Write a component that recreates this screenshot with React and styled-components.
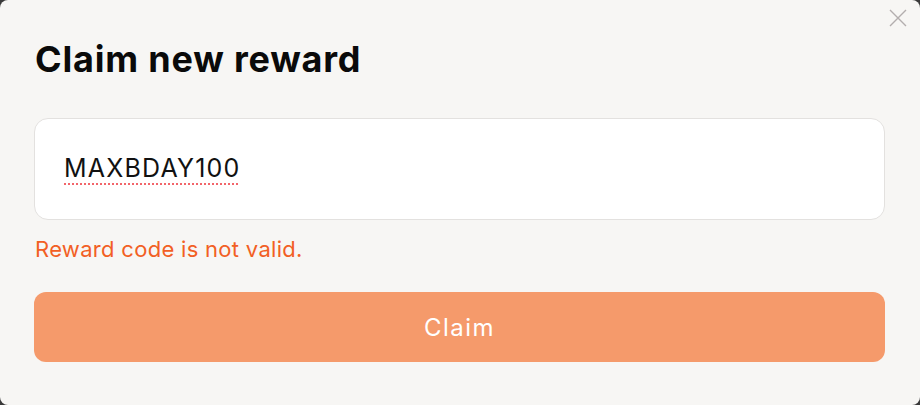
import React from 'react';
import styled, { createGlobalStyle } from 'styled-components';

const GlobalStyle = createGlobalStyle`
  html, body {
    margin: 0;
    padding: 0;
    background: #3a3a3a;
  }
  * {
    box-sizing: border-box;
  }
`;

const ClaimRewardModal = () => {
  return (
    <>
      <GlobalStyle />
      <ModalLayout>
        <CloseButton aria-label="Close">
          <svg width="18" height="18" viewBox="0 0 18 18" fill="none">
            <path d="M1 1L17 17M17 1L1 17" stroke="#b3aeae" strokeWidth="1.4" />
          </svg>
        </CloseButton>
        <ModalTitle>Claim new reward</ModalTitle>
        <CodeField>
          <CodeText>MAXBDAY100</CodeText>
        </CodeField>
        <ErrorText>Reward code is not valid.</ErrorText>
        <ClaimButton>Claim</ClaimButton>
      </ModalLayout>
    </>
  );
};

export default ClaimRewardModal;

const ModalLayout = styled.div`
  position: relative;
  width: 920px;
  height: 405px;
  padding: 36px 35px 0 34px;
  display: flex;
  flex-direction: column;
  background-color: #f7f6f4;
  border-radius: 8px;
  font-family: Inter, 'Liberation Sans', sans-serif;
`;

const CloseButton = styled.button`
  position: absolute;
  top: 9px;
  right: 13px;
  width: 18px;
  height: 18px;
  padding: 0;
  border: none;
  background: none;
  display: flex;
  cursor: pointer;
`;

const ModalTitle = styled.h2`
  margin: 0 0 0 1px;
  color: #0a0a0a;
  font-size: 36px;
  line-height: 46px;
  font-weight: 700;
  letter-spacing: 0.8px;
`;

const CodeField = styled.div`
  margin-top: 36px;
  height: 102px;
  padding: 0 29px 2px;
  display: flex;
  align-items: center;
  background-color: #fff;
  border: 1.5px solid #e3e1df;
  border-radius: 14px;
`;

const CodeText = styled.span`
  color: #111;
  font-size: 25px;
  letter-spacing: 1.2px;
  text-decoration: underline dotted #f2656a;
  text-decoration-thickness: 2px;
  text-underline-offset: 6px;
`;

const ErrorText = styled.p`
  margin: 14px 0 0 1px;
  color: #f25f24;
  font-size: 22px;
  line-height: 30px;
  letter-spacing: 0.3px;
`;

const ClaimButton = styled.button`
  flex: none;
  margin-top: 28px;
  height: 70px;
  border: none;
  border-radius: 12px;
  background-color: #f59a6b;
  color: #fff;
  font-family: inherit;
  font-size: 24px;
  letter-spacing: 1.5px;
  cursor: pointer;
`;
